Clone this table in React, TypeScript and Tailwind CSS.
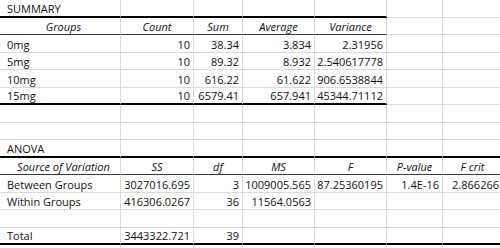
import React from "react"

// bottom edge of a row: gray grid line, thin dark rule, or thick rule
type Edge = "grid" | "thin" | "thick"

interface Row {
  cells: string[]
  head?: boolean
  title?: boolean
  // how many columns (from A) carry the dark rule
  span?: number
  edge?: Edge
}

const rows: Row[] = [
  { cells: ["SUMMARY"], title: true, edge: "thick", span: 5 },
  { cells: ["Groups", "Count", "Sum", "Average", "Variance"], head: true, edge: "thin", span: 5 },
  { cells: ["0mg", "10", "38.34", "3.834", "2.31956"] },
  { cells: ["5mg", "10", "89.32", "8.932", "2.540617778"] },
  { cells: ["10mg", "10", "616.22", "61.622", "906.6538844"] },
  { cells: ["15mg", "10", "6579.41", "657.941", "45344.71112"], edge: "thick", span: 5 },
  { cells: [] },
  { cells: [] },
  { cells: ["ANOVA"], title: true, edge: "thick", span: 7 },
  {
    cells: ["Source of Variation", "SS", "df", "MS", "F", "P-value", "F crit"],
    head: true,
    edge: "thin",
    span: 7,
  },
  { cells: ["Between Groups", "3027016.695", "3", "1009005.565", "87.25360195", "1.4E-16", "2.866266"] },
  { cells: ["Within Groups", "416306.0267", "36", "11564.0563"] },
  { cells: [] },
  { cells: ["Total", "3443322.721", "39"], edge: "thick", span: 7 },
]

const edgeClass: Record<Edge, string> = {
  grid: "border-b border-b-[#d9d9d9]",
  thin: "border-b border-b-[#3a3a3a]",
  thick: "border-b-2 border-b-black",
}

function Cell({ text, col, row, edge }: { text?: string; col: number; row: Row; edge: Edge }) {
  const left = col === 0 || row.title
  let align = left ? "justify-start pl-[3px]" : "justify-end pr-[3px]"
  if (row.head) align = col === 0 ? "justify-center pl-[3px]" : "justify-center"

  return (
    <div
      className={`flex items-end pb-[2px] overflow-visible whitespace-nowrap border-r border-r-[#d9d9d9] ${edgeClass[edge]} ${align} ${
        row.head ? "italic" : ""
      }`}
    >
      {text}
    </div>
  )
}

export default function App() {
  return (
    <div
      className="w-[500px] h-[248px] overflow-hidden bg-white text-[11px] leading-none text-[#111]"
      style={{ fontFamily: '"Open Sans", "Liberation Sans", sans-serif' }}
    >
      {rows.map((row, i) => {
        const edge = row.edge ?? "grid"
        const span = row.span ?? 0
        return (
          <div
            key={i}
            className={`grid grid-cols-[4px_117px_73px_49px_72px_72px_56px_60px] ${
              i % 2 === 0 ? "h-[18px]" : "h-[17px]"
            }`}
          >
            {/* sliver of the column left of A */}
            <div className={span > 0 ? edgeClass[edge] : edgeClass.grid} />
            {Array.from({ length: 7 }).map((_, c) => (
              <Cell
                key={c}
                text={row.cells[c]}
                col={c}
                row={row}
                edge={c < span ? edge : "grid"}
              />
            ))}
          </div>
        )
      })}
      {/* next row, cut off at the bottom */}
      <div className="grid grid-cols-[4px_117px_73px_49px_72px_72px_56px_60px] h-[17px]">
        <div />
        {Array.from({ length: 7 }).map((_, c) => (
          <div key={c} className="border-r border-r-[#d9d9d9]" />
        ))}
      </div>
    </div>
  )
}
